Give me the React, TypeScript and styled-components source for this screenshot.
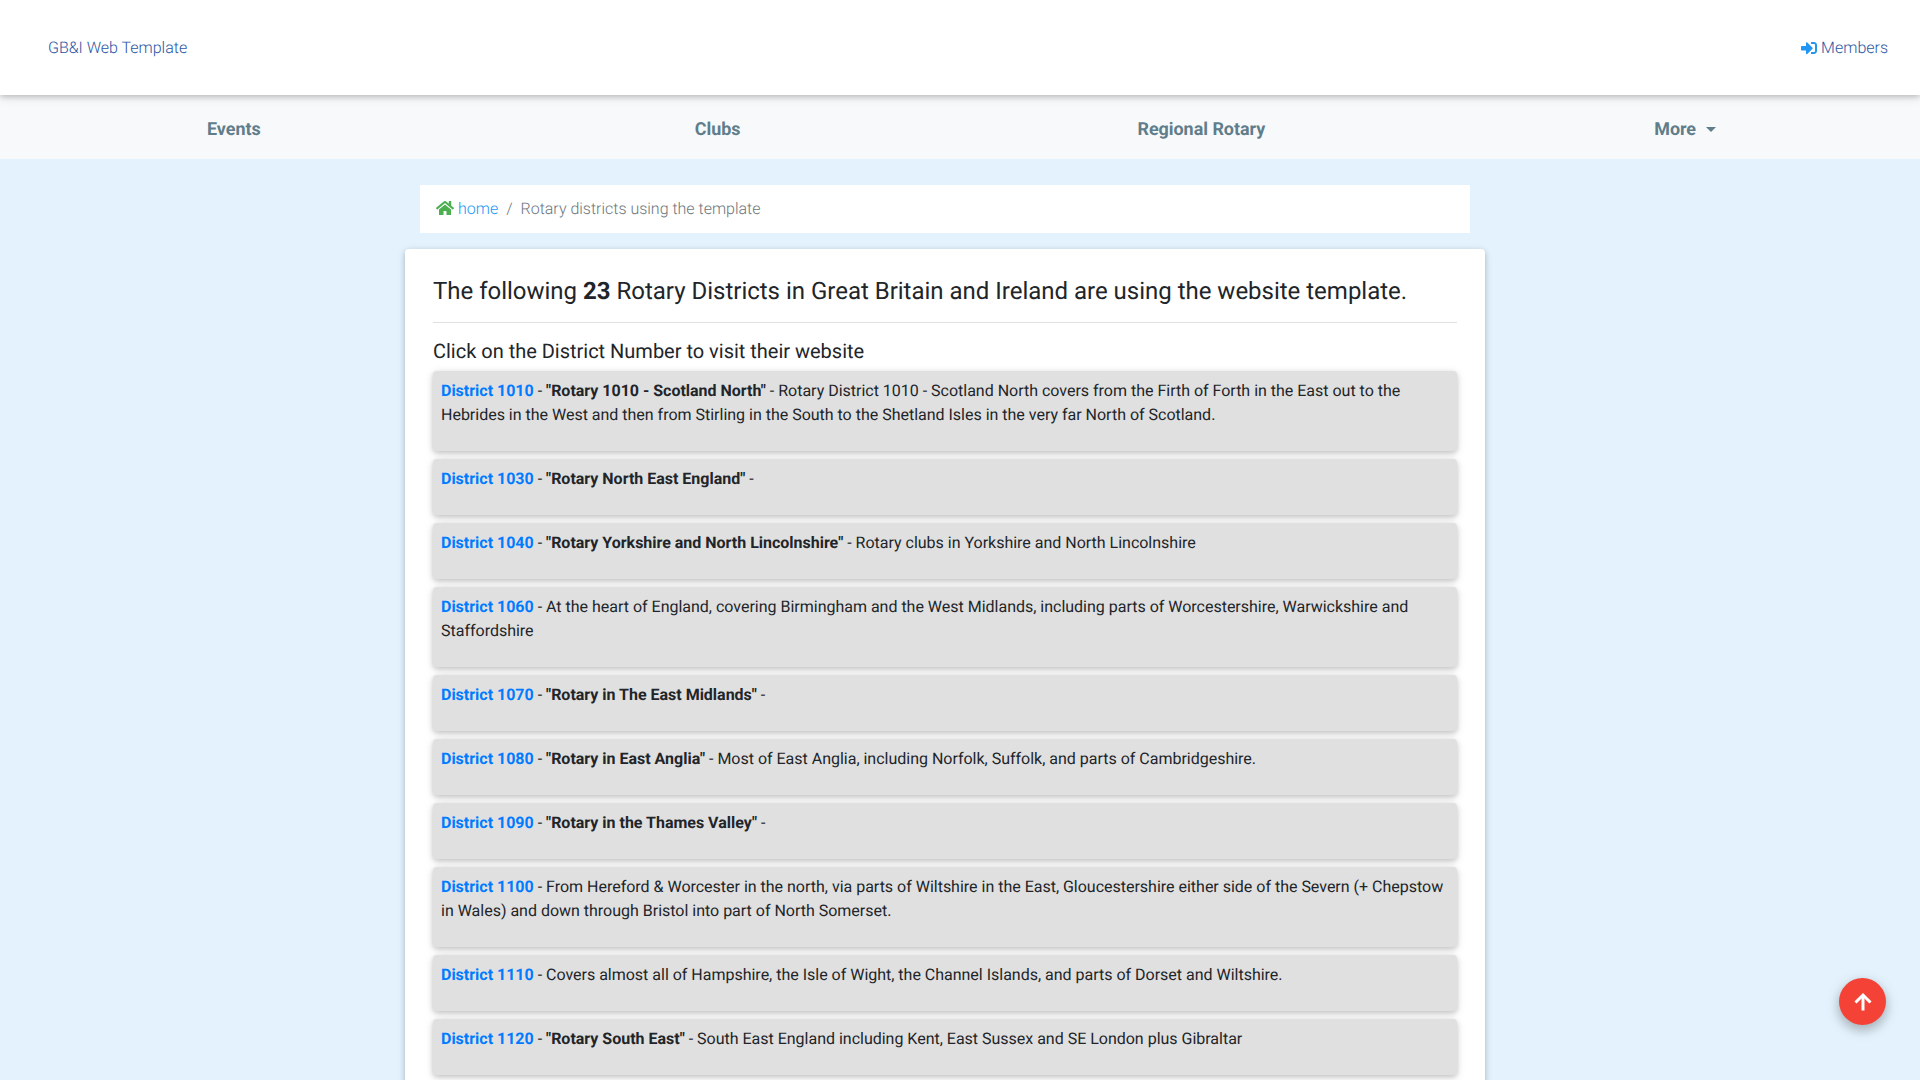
import React from "react";
import styled, { createGlobalStyle } from "styled-components";
import { FaHome, FaSignInAlt } from "react-icons/fa";

const Global = createGlobalStyle`
  html, body { margin: 0; padding: 0; height: 100%; overflow: hidden; }
  body { background: #e3f2fd; font-family: Roboto, "Liberation Sans", sans-serif; font-size: 16px; line-height: 24px; color: #212529; text-rendering: geometricPrecision; letter-spacing: -0.01px; }
  * { box-sizing: border-box; }
  a { text-decoration: none; }
`;

const TopBar = styled.header`
  position: relative;
  z-index: 2;
  height: 95px;
  background: #fff;
  display: flex;
  align-items: center;
  justify-content: space-between;
  padding: 0 32px 0 48px;
  box-shadow: 0 2px 5px 0 rgba(0, 0, 0, 0.16), 0 2px 10px 0 rgba(0, 0, 0, 0.12);
`;
const BrandLink = styled.a`
  color: #2b55a3;
  font-weight: 300;
  display: flex;
  align-items: center;
  gap: 4px;
`;
const MemberIcon = styled(FaSignInAlt)`
  color: #2196f3;
  width: 16px;
  height: 16px;
`;
const NavBar = styled.nav`
  height: 64px;
  background: #f8f9fa;
  display: grid;
  grid-template-columns: repeat(4, 1fr);
  margin: 0 -7px 0 -8px;
  padding-top: 6px;
`;
const NavItem = styled.a`
  display: flex;
  align-items: center;
  justify-content: center;
  color: #607d8b;
  font-size: 17.92px;
  font-weight: 700;
`;
const Caret = styled.span`
  display: inline-block;
  margin-left: 10px;
  margin-bottom: 2px;
  border-top: 5px solid #607d8b;
  border-left: 5px solid transparent;
  border-right: 5px solid transparent;
`;
const Main = styled.main`
  display: flex;
  justify-content: center;
  padding: 26px 30px 0 0;
`;
const Column = styled.div`
  width: 1080px;
  display: flex;
  flex-direction: column;
`;
const Breadcrumb = styled.ol`
  list-style: none;
  margin: 0 15px 16px;
  height: 48px;
  padding: 0 16px;
  background: #fff;
  display: flex;
  align-items: center;
  font-weight: 300;
  color: #6c757d;
`;
const HomeLink = styled.a`
  color: #2196f3;
  display: flex;
  align-items: center;
  gap: 4px;
`;
const HomeIcon = styled(FaHome)`
  color: #4caf50;
  width: 18px;
  height: 16px;
  margin-top: -2px;
`;
const Separator = styled.span`
  padding: 0 8px;
`;
const Card = styled.section`
  background: #fff;
  border-radius: 4px;
  padding: 28px;
  box-shadow: 0 2px 5px 0 rgba(0, 0, 0, 0.16), 0 2px 10px 0 rgba(0, 0, 0, 0.12);
`;
const Heading = styled.h4`
  margin: 0;
  font-size: 24px;
  line-height: 29px;
  font-weight: 400;
  padding-bottom: 16px;
  border-bottom: 1px solid #e0e0e0;
`;
const SubHeading = styled.h5`
  margin: 16px 0 8px;
  font-size: 20px;
  line-height: 24px;
  font-weight: 400;
`;
const List = styled.div`
  display: flex;
  flex-direction: column;
  gap: 8px;
`;
const Item = styled.div`
  background: #e0e0e0;
  border-radius: 4px;
  padding: 8px;
  box-shadow: 0 2px 5px 0 rgba(0, 0, 0, 0.16), 0 2px 10px 0 rgba(0, 0, 0, 0.12);
`;
const ItemText = styled.p`
  margin: 0 0 16px;
`;
const DistrictLink = styled.a`
  color: #007bff;
  font-weight: 700;
`;
const UpButton = styled.a`
  position: fixed;
  left: 1839px;
  top: 978px;
  width: 47px;
  height: 47px;
  border-radius: 50%;
  background: #f44336;
  color: #fff;
  display: flex;
  align-items: center;
  justify-content: center;
  box-shadow: 0 5px 11px 0 rgba(0, 0, 0, 0.18), 0 4px 15px 0 rgba(0, 0, 0, 0.15);
  z-index: 3;
`;

const districts: { n: string; title?: string; text?: string }[] = [
  { n: "1010", title: "Rotary 1010 - Scotland North", text: "Rotary District 1010 - Scotland North covers from the Firth of Forth in the East out to the Hebrides in the West and then from Stirling in the South to the Shetland Isles in the very far North of Scotland." },
  { n: "1030", title: "Rotary North East England" },
  { n: "1040", title: "Rotary Yorkshire and North Lincolnshire", text: "Rotary clubs in Yorkshire and North Lincolnshire" },
  { n: "1060", text: "At the heart of England, covering Birmingham and the West Midlands, including parts of Worcestershire, Warwickshire and Staffordshire" },
  { n: "1070", title: "Rotary in The East Midlands" },
  { n: "1080", title: "Rotary in East Anglia", text: "Most of East Anglia, including Norfolk, Suffolk, and parts of Cambridgeshire." },
  { n: "1090", title: "Rotary in the Thames Valley" },
  { n: "1100", text: "From Hereford & Worcester in the north, via parts of Wiltshire in the East, Gloucestershire either side of the Severn (+ Chepstow in Wales) and down through Bristol into part of North Somerset." },
  { n: "1110", text: "Covers almost all of Hampshire, the Isle of Wight, the Channel Islands, and parts of Dorset and Wiltshire." },
  { n: "1120", title: "Rotary South East", text: "South East England including Kent, East Sussex and SE London plus Gibraltar" },
];

export default function App() {
  return (
    <>
      <Global />
      <TopBar>
        <BrandLink href="#">GB&amp;I Web Template</BrandLink>
        <BrandLink href="#"><MemberIcon /> Members</BrandLink>
      </TopBar>
      <NavBar>
        <NavItem href="#">Events</NavItem>
        <NavItem href="#">Clubs</NavItem>
        <NavItem href="#">Regional Rotary</NavItem>
        <NavItem href="#">More<Caret /></NavItem>
      </NavBar>
      <Main>
        <Column>
          <Breadcrumb>
            <HomeLink href="#"><HomeIcon /> home</HomeLink>
            <Separator>/</Separator>
            Rotary districts using the template
          </Breadcrumb>
          <Card>
            <Heading>The following <b>23</b> Rotary Districts in Great Britain and Ireland are using the website template.</Heading>
            <SubHeading>Click on the District Number to visit their website</SubHeading>
            <List>
              {districts.map((d) => (
                <Item key={d.n}>
                  <ItemText>
                    <DistrictLink href="#">District {d.n}</DistrictLink>
                    {" - "}
                    {d.title && <><b>"{d.title}"</b>{" - "}</>}
                    {d.text}
                  </ItemText>
                </Item>
              ))}
            </List>
          </Card>
        </Column>
      </Main>
      <UpButton href="#">
        <svg width="20" height="20" viewBox="0 0 20 20" fill="none" stroke="currentColor" strokeWidth="3">
          <path d="M10 18.5V3" />
          <path d="M2.5 10.5L10 3l7.5 7.5" />
        </svg>
      </UpButton>
    </>
  );
}
